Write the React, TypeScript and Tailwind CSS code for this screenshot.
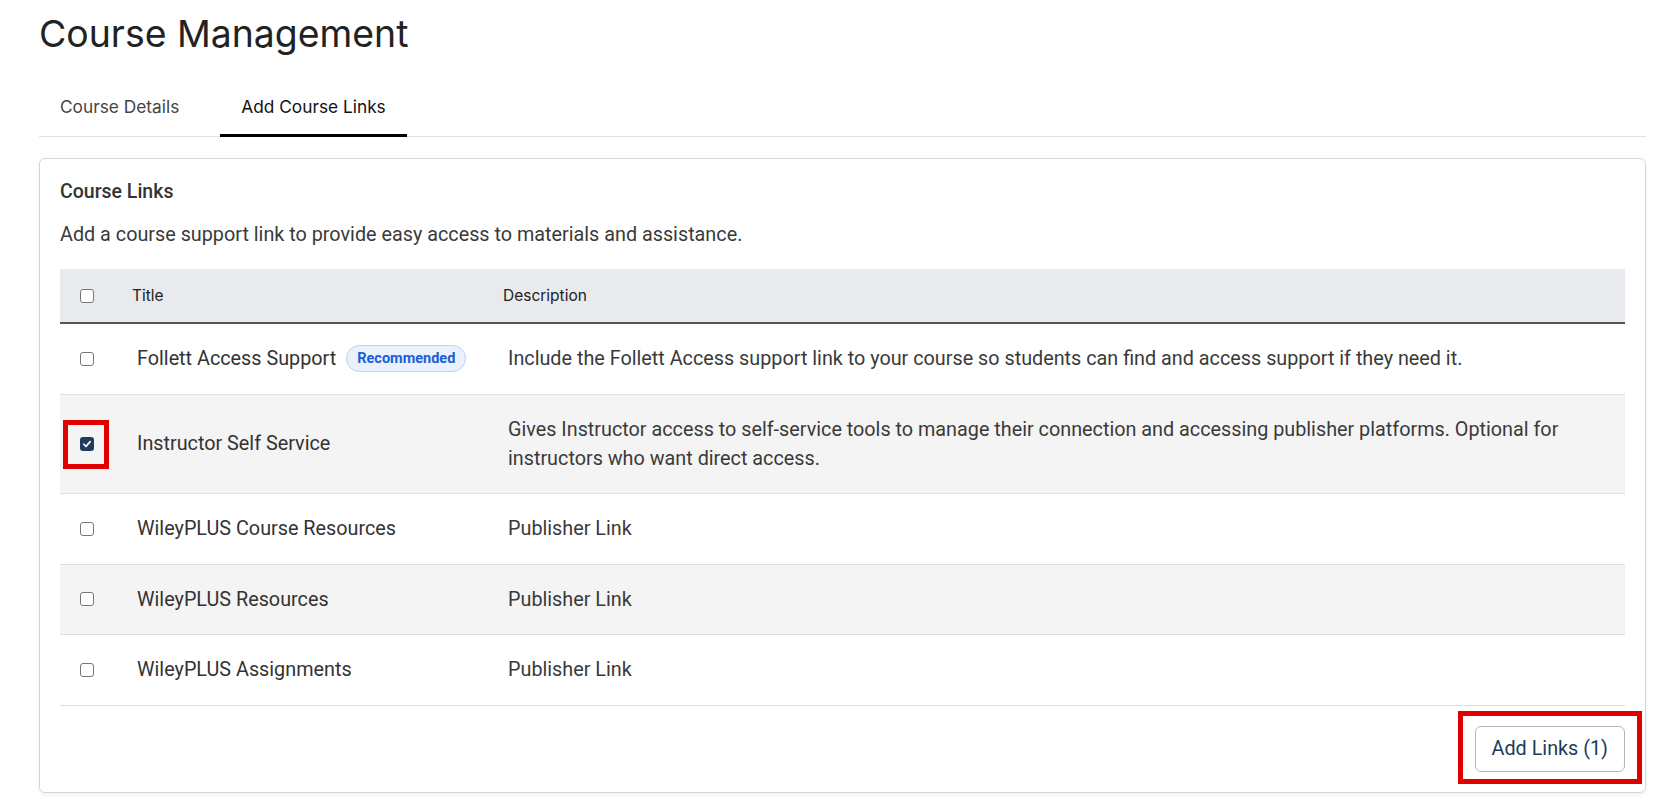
import { useState } from 'react';

const links = [
  {
    title: 'Follett Access Support',
    recommended: true,
    description:
      'Include the Follett Access support link to your course so students can find and access support if they need it.',
  },
  {
    title: 'Instructor Self Service',
    recommended: false,
    description:
      'Gives Instructor access to self-service tools to manage their connection and accessing publisher platforms. Optional for instructors who want direct access.',
  },
  { title: 'WileyPLUS Course Resources', recommended: false, description: 'Publisher Link' },
  { title: 'WileyPLUS Resources', recommended: false, description: 'Publisher Link' },
  { title: 'WileyPLUS Assignments', recommended: false, description: 'Publisher Link' },
];

const Checkbox = ({ checked, onClick }: { checked: boolean; onClick?: () => void }) => (
  <button
    type="button"
    onClick={onClick}
    className={
      checked
        ? 'flex h-[14px] w-[14px] items-center justify-center rounded-[3px] bg-[#1f3c5c]'
        : 'h-[14px] w-[14px] rounded-[3px] border border-[#767676] bg-white'
    }
  >
    {checked && (
      <svg viewBox="0 0 12 12" className="h-[10px] w-[10px]" fill="none">
        <path d="M2.2 6.3 4.8 8.8 9.8 3.2" stroke="white" strokeWidth="2" strokeLinecap="round" strokeLinejoin="round" />
      </svg>
    )}
  </button>
);

const App = () => {
  const [selected, setSelected] = useState<number[]>([1]);
  const toggle = (i: number) =>
    setSelected((s) => (s.includes(i) ? s.filter((x) => x !== i) : [...s, i]));

  return (
    <div className="min-h-[810px] bg-white pl-[39px] pr-[10px] font-['Roboto',sans-serif] text-[#333]">
      <h1 className="pt-[11px] font-['Inter',sans-serif] text-[37.4px] leading-[46px] font-normal text-[#222]">
        Course Management
      </h1>

      <div className="mt-6 flex border-b border-[#e2e2e2] font-['Inter',sans-serif] text-[17.3px]">
        <div className="px-[21px] pt-[14px] pb-[17px] leading-6 text-[#444]">Course Details</div>
        <div className="relative ml-5 px-[21px] pt-[14px] pb-[17px] leading-6 text-[#111]">
          Add Course Links
          <span className="absolute right-0 -bottom-px left-0 h-[3px] bg-black" />
        </div>
      </div>

      <section className="mt-[21px] rounded-md border border-[#d6d6d6] bg-white px-5 pt-[21px] pb-[20px] shadow-[0_2px_4px_rgba(0,0,0,0.06)]">
        <h2 className="text-[19.5px] leading-6 font-medium text-[#333]">Course Links</h2>
        <p className="mt-4 text-[19.8px] leading-[29px] text-[#3a3a3a]">
          Add a course support link to provide easy access to materials and assistance.
        </p>

        <div className="mt-5">
          <div className="grid h-[55px] grid-cols-[72px_371px_1fr] items-center border-b-2 border-[#555] bg-[#e9eaee] font-['Inter',sans-serif] text-[15.5px] text-[#222]">
            <div className="flex pl-5">
              <Checkbox checked={false} />
            </div>
            <div>Title</div>
            <div>Description</div>
          </div>

          {links.map((link, i) => (
            <div
              key={link.title}
              className={`grid grid-cols-[72px_371px_1fr] items-center border-b border-[#dedede] py-[20.25px] text-[19.8px] leading-[29px] ${
                i % 2 === 1 ? 'bg-[#f4f4f4]' : 'bg-white'
              }`}
            >
              <div className="flex pl-5">
                <div className="relative flex">
                  <Checkbox checked={selected.includes(i)} onClick={() => toggle(i)} />
                  {i === 1 && (
                    <span className="pointer-events-none absolute -top-[17px] -right-[15px] -bottom-[18px] -left-[17px] border-[5px] border-[#e30000]" />
                  )}
                </div>
              </div>
              <div className="flex items-center gap-[10px] pl-[5px] text-[#333]">
                <span>{link.title}</span>
                {link.recommended && (
                  <span className="rounded-full border border-[#bcd1f3] bg-[#e9f1fd] px-[10px] text-[14.5px] leading-[25px] font-bold text-[#1b5fd6]">
                    Recommended
                  </span>
                )}
              </div>
              <div className="pr-4 pl-[5px] text-[#3a3a3a]">{link.description}</div>
            </div>
          ))}
        </div>

        <div className="mt-5 flex justify-end">
          <div className="relative">
            <button
              type="button"
              className="h-[46px] rounded-md border border-[#aeb7c0] bg-white px-4 text-[19.8px] text-[#1f3a58]"
            >
              Add Links ({selected.length})
            </button>
            <span className="pointer-events-none absolute -top-[15px] -right-[17px] -bottom-[12px] -left-[17px] border-[5px] border-[#e30000]" />
          </div>
        </div>
      </section>
    </div>
  );
};

export default App;
